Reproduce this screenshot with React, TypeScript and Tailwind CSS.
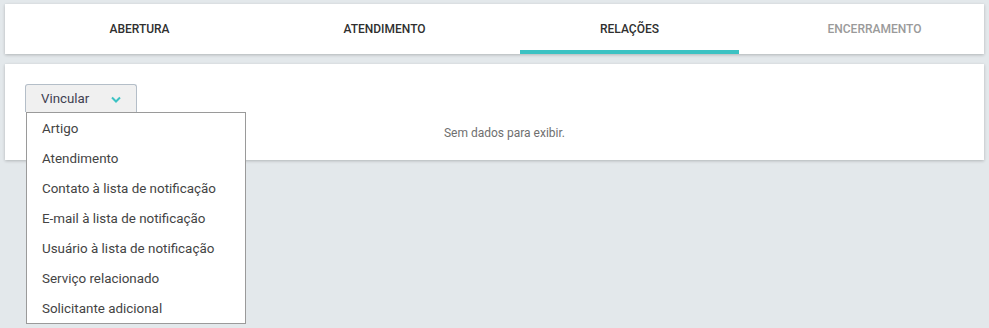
const tabs = [
  { label: "ABERTURA", state: "normal" },
  { label: "ATENDIMENTO", state: "normal" },
  { label: "RELAÇÕES", state: "active" },
  { label: "ENCERRAMENTO", state: "disabled" },
];

const options = [
  "Artigo",
  "Atendimento",
  "Contato à lista de notificação",
  "E-mail à lista de notificação",
  "Usuário à lista de notificação",
  "Serviço relacionado",
  "Solicitante adicional",
];

export default function App() {
  return (
    <div
      className="min-h-screen bg-[#e3e8eb] px-[5px] pt-[4px]"
      style={{ fontFamily: "Roboto, 'Noto Sans', sans-serif" }}
    >
      {/* Tabs */}
      <div className="flex h-[50px] gap-[26px] bg-white pl-[25px] shadow-[0_1px_3px_rgba(0,0,0,0.22)]">
        {tabs.map((t) => (
          <div
            key={t.label}
            className={`flex w-[219px] items-center justify-center border-b-4 pt-[4px] text-[12px] font-medium ${
              t.state === "active"
                ? "border-[#3cc2c3] text-[#2f2f2f]"
                : t.state === "disabled"
                  ? "border-transparent text-[#9a9a9a]"
                  : "border-transparent text-[#2f2f2f]"
            }`}
          >
            {t.label}
          </div>
        ))}
      </div>

      {/* Content */}
      <div className="mt-[10px] flex h-[96px] flex-col bg-white pl-[20px] pt-[20px] shadow-[0_1px_3px_rgba(0,0,0,0.22)]">
        <div className="relative w-[112px]">
          <button className="flex h-[28px] w-[112px] items-center justify-between rounded-t-[3px] border border-b-0 border-[#b4bec8] bg-[#f0f0f0] pl-[15px] pr-[15px] pt-[1px] text-[13.3px] text-[#3f4150]">
            Vincular
            <svg width="10" height="7" viewBox="0 0 10 7" fill="none">
              <path d="M1 1.5 L5 5.5 L9 1.5" stroke="#3cc2c3" strokeWidth="2" />
            </svg>
          </button>
          <div className="absolute left-[1px] top-[28px] z-10 w-[220px] border border-[#9a9a9a] bg-white">
            {options.map((o) => (
              <div key={o} className="flex h-[30px] items-center pl-[15px] pt-[3px] text-[13.4px] text-[#444]">
                {o}
              </div>
            ))}
          </div>
        </div>
        <p className="mt-[12px] text-center text-[12px] text-[#6f6f6f]">Sem dados para exibir.</p>
      </div>
    </div>
  );
}
